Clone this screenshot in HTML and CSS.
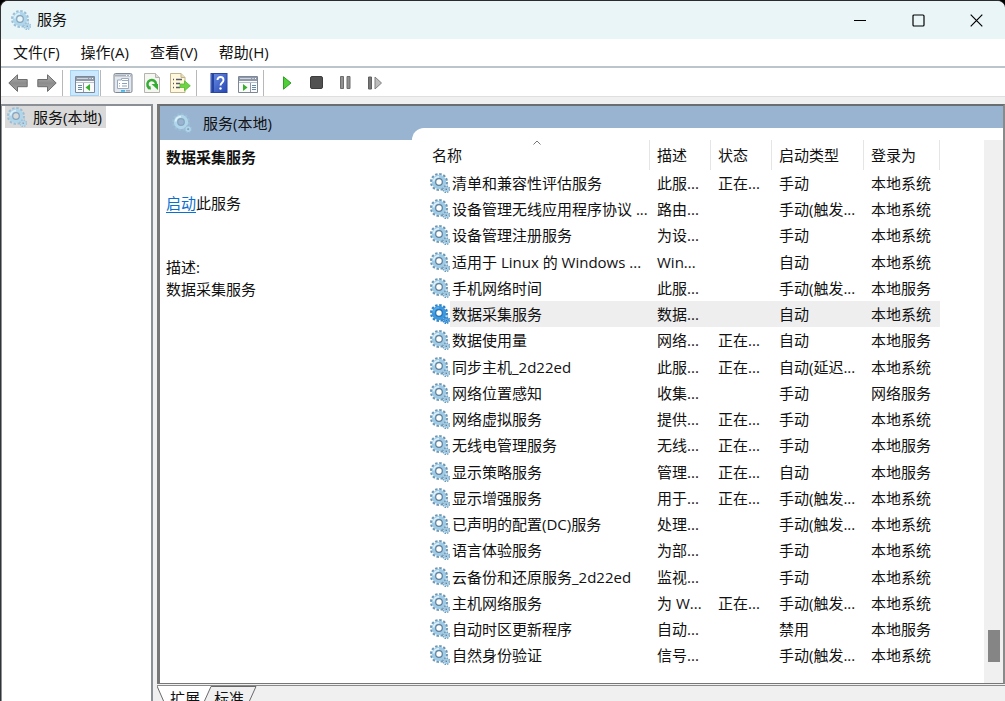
FILE: index.html
```
<!DOCTYPE html>
<html lang="zh-CN">
<head>
<meta charset="utf-8">
<title>服务</title>
<link rel="stylesheet" href="styles.css">
</head>
<body>
<svg class="defs" aria-hidden="true">
  <defs>
    <linearGradient id="metal" x1="0" y1="0" x2="0" y2="1"><stop offset="0" stop-color="#b4b4b4"/><stop offset=".5" stop-color="#8c8c8c"/><stop offset="1" stop-color="#a4a4a4"/></linearGradient>
    <linearGradient id="book" x1="0" y1="0" x2="1" y2="1"><stop offset="0" stop-color="#6f90e6"/><stop offset="1" stop-color="#2447b4"/></linearGradient>
    <symbol id="gear" viewBox="0 0 20 20">
      <circle cx="9" cy="9" r="7.700" fill="none" stroke="var(--teeth)" stroke-width="2.600" stroke-dasharray="2.400 1.630"/>
      <circle cx="9" cy="9" r="5.200" fill="none" stroke="var(--ring)" stroke-width="4"/>
      <circle cx="9" cy="9" r="3.300" fill="none" stroke="var(--rim)" stroke-width="1.200"/>
      <path d="M3.600 8.500A5.400 5.400 0 0 1 9 3.600" fill="none" stroke="var(--shine)" stroke-width="1.800"/>
      <circle cx="16.200" cy="16.200" r="3" fill="none" stroke="var(--teeth)" stroke-width="1.900" stroke-dasharray="1.400 .956"/>
      <circle cx="16.200" cy="16.200" r="1.900" fill="none" stroke="var(--ring)" stroke-width="1.600"/>
      <circle cx="16.200" cy="16.200" r=".9" fill="var(--rim)"/>
    </symbol>
  </defs>
</svg>
<div class="window">
  <header class="titlebar">
    <svg class="gear gear-soft"><use href="#gear"/></svg>
    <h1 class="title">服务</h1>
    <div class="caption">
      <button class="caption-btn" aria-label="最小化"><svg width="13" height="13"><path d="M0 6.5h12" stroke="#000"/></svg></button>
      <button class="caption-btn" aria-label="最大化"><svg width="13" height="13"><rect x="1" y="1" width="11" height="11" rx="1" fill="none" stroke="#000" stroke-width="1.2"/></svg></button>
      <button class="caption-btn" aria-label="关闭"><svg width="13" height="13"><path d="M.7.7l11.6 11.6M12.3.7L.7 12.3" stroke="#000" stroke-width="1.2"/></svg></button>
    </div>
  </header>
  <nav class="menu">
    <button class="menu-item">文件(F)</button>
    <button class="menu-item">操作(A)</button>
    <button class="menu-item">查看(V)</button>
    <button class="menu-item">帮助(H)</button>
  </nav>
  <div class="toolbar" role="toolbar">
    <button class="tool" aria-label="后退"><svg width="20" height="18"><path d="M.8 9L9.500.8v4.700h9.700v7.200H9.500v4.700z" fill="url(#metal)" stroke="#6d6d6d"/></svg></button>
    <button class="tool" aria-label="前进"><svg width="20" height="18"><path d="M19.200 9L10.500.8v4.700H.8v7.200h9.700v4.700z" fill="url(#metal)" stroke="#6d6d6d"/></svg></button>
    <span class="sep"></span>
    <button class="tool tool-on" aria-label="显示/隐藏控制台树"><svg width="20" height="20"><path d="M.5 3.500h19v16H.5z" fill="#fbfbfb" stroke="#7d8896"/><path d="M1 4h18v4H1z" fill="#8e9aaa"/><path d="M2 5.500h11" stroke="#cfd6de"/><path d="M14.500 5.500h1M17 5.500h1" stroke="#fff"/><path d="M1 9.500h18" stroke="#b8c0ca"/><path d="M8.500 10v9" stroke="#8e9aaa"/><path d="M3 12.500h4M3 14.500h4M3 16.500h4" stroke="#6688a8"/><path d="M15 11v7l-4.500-3.500z" fill="#36b02c"/></svg></button>
    <span class="sep"></span>
    <button class="tool" aria-label="属性"><svg width="20" height="20"><rect x="1" y=".5" width="18" height="19" rx="1.500" fill="#e4e8ec" stroke="#7d8896"/><path d="M2 2.500h16" stroke="#a7b1bd" stroke-width="2"/><path d="M13 2.500h1M16 2.500h1" stroke="#fff"/><path d="M4.500 7h4V5.500h7v10h-11z" fill="#fff" stroke="#9aabbf"/><path d="M9 7.500h6" stroke="#9aabbf"/><path d="M6 10.500h1M9 10.500h5M6 13h1M9 13h5" stroke="#8ba2ba"/><path d="M8 17.800h4" stroke="#35b9f0" stroke-width="1.800"/><path d="M13 17.800h4" stroke="#a5aeb9" stroke-width="1.500"/></svg></button>
    <button class="tool" aria-label="刷新"><svg width="18" height="20"><path d="M1.500.5h11l4 4v15h-15z" fill="#f5f5f1" stroke="#b4b4ac"/><path d="M12.500.5v4h4" fill="#ddd" stroke="#b4b4ac"/><path d="M5.600 14.200A4.300 4.300 0 1 1 13 11" fill="none" stroke="#35ad35" stroke-width="2.500"/><path d="M8.500 11H15v6z" fill="#35ad35"/><path d="M3.500 13l4 .3.500 3.200-3-.2z" fill="#35ad35"/></svg></button>
    <button class="tool" aria-label="导出列表"><svg width="21" height="20"><path d="M.5.500h10.500l4 4v15H.5z" fill="#fff8dc" stroke="#bfb48e"/><path d="M11 .5v4h4" fill="#e8ddb8" stroke="#bfb48e"/><path d="M3 6.500h1M3 10.500h1M3 14.500h1M6 6.500h6M6 10.500h4M6 14.500h4" stroke="#57576b" stroke-width="1.300"/><path d="M10 11h4.500V7.800l5.800 5-5.800 5v-3.300H10z" fill="#6fd444" stroke="#55b832" stroke-width=".8"/></svg></button>
    <span class="sep"></span>
    <button class="tool" aria-label="帮助"><svg width="18" height="20"><rect x="1" y=".5" width="16" height="19" fill="url(#book)" stroke="#2a469f"/><path d="M3 1v18" stroke="#2344a2" stroke-width="2"/><path d="M7.500 7c0-4 6-4 6 0 0 2.700-3 2.700-3 5.500" fill="none" stroke="#fff" stroke-width="1.900"/><circle cx="10.500" cy="15.500" r="1.200" fill="#fff"/></svg></button>
    <button class="tool" aria-label="显示/隐藏操作窗格"><svg width="20" height="20"><path d="M.5 3.500h19v16H.5z" fill="#fbfbfb" stroke="#7d8896"/><path d="M1 4h18v4H1z" fill="#8e9aaa"/><path d="M2 5.500h11" stroke="#cfd6de"/><path d="M14.500 5.500h1M17 5.500h1" stroke="#fff"/><path d="M1 9.500h18" stroke="#b8c0ca"/><path d="M12.500 10v9" stroke="#8e9aaa"/><path d="M14 12.500h4M14 14.500h4M14 16.500h4" stroke="#6688a8"/><path d="M5 11v7l4.500-3.500z" fill="#36b02c"/></svg></button>
    <span class="sep sep-wide"></span>
    <button class="tool" aria-label="启动服务"><svg width="9" height="14"><path d="M.5.800l7.500 6.200-7.500 6.200z" fill="#4fce38" stroke="#2ba022"/></svg></button>
    <button class="tool" aria-label="停止服务"><svg width="13" height="13"><rect x=".5" y=".5" width="12" height="12" rx="1.500" fill="#515151" stroke="#3d3d3d"/></svg></button>
    <button class="tool" aria-label="暂停服务"><svg width="11" height="13"><path d="M.5.500h3v12h-3zM7 .5h3v12H7z" fill="#929292" stroke="#6d6d6d"/></svg></button>
    <button class="tool" aria-label="重启动服务"><svg width="16" height="14"><path d="M1.500 1h3v12h-3z" fill="#777" stroke="#606060"/><path d="M8 1l6.500 6L8 13z" fill="#bdbdbd" stroke="#808080"/></svg></button>
  </div>
  <main class="workspace">
    <aside class="tree">
      <a class="tree-item" href="#services"><svg class="gear gear-soft"><use href="#gear"/></svg>服务(本地)</a>
    </aside>
    <div class="content">
      <section class="pane" id="services">
        <h2 class="pane-head"><svg class="gear gear-soft"><use href="#gear"/></svg>服务(本地)</h2>
        <div class="detail">
          <h3 class="detail-name">数据采集服务</h3>
          <p class="detail-action"><a class="link" href="#start">启动</a>此服务</p>
          <p class="detail-text">描述:<br>数据采集服务</p>
        </div>
        <div class="list">
          <div class="list-body">
            <table class="services">
              <colgroup><col class="c-name"><col class="c-desc"><col class="c-state"><col class="c-start"><col class="c-logon"></colgroup>
              <thead><tr><th class="sorted">名称<svg class="sort" width="8" height="5"><path d="M.5 4.500L4 1l3.500 3.500" fill="none" stroke="#777"/></svg></th><th>描述</th><th>状态</th><th>启动类型</th><th>登录为</th></tr></thead>
              <tbody id="rows"></tbody>
            </table>
          </div>
          <div class="scroll"><div class="thumb"></div></div>
        </div>
      </section>
      <div class="tabs">
        <svg class="tab-shapes" width="110" height="16" aria-hidden="true"><path d="M54 1h45l-7 16H48z" fill="#f0f0f0"/><path d="M0 0h54l-7 16H7z" fill="#fff"/><path d="M0 0l7 16M47 16L54 .5h45l-7 15.500" fill="none" stroke="#6a6a6a"/></svg>
        <button class="tab">扩展</button>
        <button class="tab">标准</button>
      </div>
    </div>
  </main>
</div>
<script src="app.js"></script>
</body>
</html>
```
FILE: app.js
```
const services = [
  ["清单和兼容性评估服务", "此服...", "正在...", "手动", "本地系统"],
  ["设备管理无线应用程序协议 ...", "路由...", "", "手动(触发...", "本地系统"],
  ["设备管理注册服务", "为设...", "", "手动", "本地系统"],
  ["适用于 Linux 的 Windows ...", "Win...", "", "自动", "本地系统"],
  ["手机网络时间", "此服...", "", "手动(触发...", "本地服务"],
  ["数据采集服务", "数据...", "", "自动", "本地系统"],
  ["数据使用量", "网络...", "正在...", "自动", "本地服务"],
  ["同步主机_2d22ed", "此服...", "正在...", "自动(延迟...", "本地系统"],
  ["网络位置感知", "收集...", "", "手动", "网络服务"],
  ["网络虚拟服务", "提供...", "正在...", "手动", "本地系统"],
  ["无线电管理服务", "无线...", "正在...", "手动", "本地服务"],
  ["显示策略服务", "管理...", "正在...", "自动", "本地服务"],
  ["显示增强服务", "用于...", "正在...", "手动(触发...", "本地系统"],
  ["已声明的配置(DC)服务", "处理...", "", "手动(触发...", "本地系统"],
  ["语言体验服务", "为部...", "", "手动", "本地系统"],
  ["云备份和还原服务_2d22ed", "监视...", "", "手动", "本地系统"],
  ["主机网络服务", "为 W...", "正在...", "手动(触发...", "本地系统"],
  ["自动时区更新程序", "自动...", "", "禁用", "本地服务"],
  ["自然身份验证", "信号...", "", "手动(触发...", "本地系统"]
];
const selected = "数据采集服务";

document.getElementById("rows").innerHTML = services.map(([name, ...rest]) =>
  `<tr class="${name === selected ? "selected" : ""}">` +
  `<td><div class="name"><svg class="gear"><use href="#gear"/></svg><span class="label">${name}</span></div></td>` +
  rest.map(text => `<td>${text}</td>`).join("") + "</tr>"
).join("");
```
FILE: styles.css
```
* { box-sizing: border-box; }

body {
  margin: 0;
  background: #000;
  color: #111;
  font: 15px/22px "Open Sans", "Noto Sans CJK SC", sans-serif;
}

h1, h2, h3, p { margin: 0; font-size: 15px; font-weight: 400; }
button { padding: 0; border: 0; background: none; color: inherit; font: inherit; }
.defs { position: absolute; width: 0; height: 0; }

.gear {
  --teeth: #6c97b4;
  --ring: #a0cbe6;
  --rim: #5f7f98;
  --shine: #dcf0fa;
  flex: none;
  width: 20px;
  height: 20px;
}
.gear-soft { --teeth: #9cbfd5; --ring: #b0d6ec; --rim: #86a5bb; }
.selected .gear { --teeth: #2f83c8; --ring: #3f98dc; --rim: #2470b4; --shine: #58aeea; }

.window {
  display: flex;
  flex-direction: column;
  height: 100vh;
  overflow: hidden;
  border-top: 1px solid #2b2b2b;
  border-left: 1px solid #333;
  border-radius: 8px 8px 0 0;
  background: #f0f0f0;
}

.titlebar {
  display: flex;
  flex: none;
  align-items: center;
  height: 38px;
  padding-left: 10px;
  background: #eaf5f8;
}
.title { padding: 0 0 3px 6px; }
.caption { display: flex; align-self: stretch; margin-left: auto; }
.caption-btn { display: grid; place-items: center; width: 58px; }

.menu {
  display: flex;
  flex: none;
  gap: 21px;
  height: 29px;
  padding: 0 12px 1px;
  border-bottom: 2px solid #bcc5cb;
  background: #fff;
}

.toolbar {
  display: flex;
  flex: none;
  align-items: center;
  height: 29px;
  padding: 1px 0 0 2px;
  border-bottom: 1px solid #dfdfdf;
  background: #fff;
}
.tool { display: grid; place-items: center; width: 29px; height: 26px; }
.tool-on { border: 1px solid #a5d3f5; background: #cce8ff; }
.sep { width: 1px; height: 26px; margin: 0 7px 0 1px; background: #b8b8b8; }
.sep-wide { margin-right: 9px; }

.workspace { display: flex; flex: 1; gap: 4px; min-height: 0; padding-top: 7px; }

.tree {
  width: 152px;
  padding: 0 3px;
  border: 1px solid #8b9097;
  border-width: 2px 2px 0 1px;
  background: #fff;
}
.tree-item {
  display: inline-flex;
  align-items: center;
  gap: 6px;
  height: 22px;
  padding: 0 4px 0 2px;
  background: #d9d9d9;
  color: inherit;
  text-decoration: none;
}

.content { display: flex; flex: 1; flex-direction: column; min-width: 0; }

.pane {
  display: grid;
  flex: 1;
  grid-template-columns: 252px 1fr;
  grid-template-rows: 22px 12px 1fr;
  min-height: 0;
  border: 2px solid #777;
  border-width: 2px 2px 1px 3px;
  border-color: #6b6e70 #8a8a8a #777 #777;
  background: #fff;
}
.pane-head {
  display: flex;
  grid-area: 1 / 1 / 3 / 3;
  align-items: center;
  gap: 11px;
  padding-left: 12px;
  background: #99b4d1;
}
.detail { grid-area: 3 / 1; padding: 6px; }
.detail-name { font-weight: 700; }
.detail-action { padding: 24px 0 42px; }
.link { color: #0b6fd0; text-underline-offset: 3px; }

.list {
  display: flex;
  grid-area: 2 / 2 / 4 / 3;
  min-height: 0;
  padding-top: 12px;
  border-radius: 12px 0 0;
  background: #fff;
}
.list-body { flex: 1; min-width: 0; overflow: hidden; padding-left: 18px; }
.scroll {
  display: flex;
  flex-direction: column;
  justify-content: flex-end;
  width: 19px;
  padding: 0 3px 21px 4px;
  background: #f0f0f0;
}
.thumb { height: 32px; background: #858585; }

.services { width: 510px; border-spacing: 0; table-layout: fixed; }
.c-name { width: 220px; }
.c-desc, .c-state { width: 61px; }
.c-start { width: 92px; }
.c-logon { width: 76px; }
.services th, .services td { padding: 0 0 0 7px; text-align: left; white-space: nowrap; }
.services th { height: 30px; border-right: 1px solid #e5e5e5; font-weight: 400; }
.services td { height: 26px; line-height: 26px; }
.services tr:nth-child(4n) td { height: 27px; }
.services .sorted { position: relative; padding-left: 2px; }
.sort { position: absolute; top: 0; right: 108px; }
.services td:first-child { padding: 0; }
.name { display: flex; align-items: center; }
.label { flex: 1; padding-left: 2px; }
.selected td:not(:first-child), .selected .label { background: #eee; }

.tabs {
  position: relative;
  display: flex;
  flex: none;
  gap: 14px;
  height: 16px;
  margin-top: 1px;
  overflow: hidden;
  padding-left: 13px;
  border-top: 1px solid #8a8a8a;
}
.tab-shapes { position: absolute; top: 0; left: 0; }
.tab { position: relative; height: 24px; line-height: 24px; }
```
